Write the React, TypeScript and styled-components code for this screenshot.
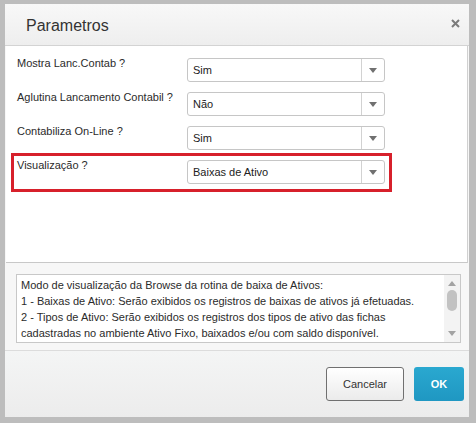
import React from 'react';
import styled, { createGlobalStyle } from 'styled-components';

type Param = { label: string; value: string; highlight?: boolean };

const params: Param[] = [
  { label: 'Mostra Lanc.Contab ?', value: 'Sim' },
  { label: 'Aglutina Lancamento Contabil ?', value: 'Não' },
  { label: 'Contabiliza On-Line ?', value: 'Sim' },
  { label: 'Visualização ?', value: 'Baixas de Ativo', highlight: true },
];

const help = [
  'Modo de visualização da Browse da rotina de baixa de Ativos:',
  '1 - Baixas de Ativo: Serão exibidos os registros de baixas de ativos já efetuadas.',
  '2 - Tipos de Ativo: Serão exibidos os registros dos tipos de ativo das fichas',
  'cadastradas no ambiente Ativo Fixo, baixados e/ou com saldo disponível.',
];

export default function App() {
  return (
    <>
      <GlobalStyle />
      <Dialog>
        <Header>
          <Title>Parametros</Title>
          <CloseButton aria-label="Fechar">
            <svg width="9" height="9" viewBox="0 0 9 9">
              <path d="M1 1L8 8M8 1L1 8" stroke="#7b7b7b" strokeWidth="2" />
            </svg>
          </CloseButton>
        </Header>

        <Panel>
          {params.map(p => (
            <Row key={p.label} $highlight={p.highlight}>
              <Label>{p.label}</Label>
              <Select>
                <SelectValue>{p.value}</SelectValue>
                <SelectArrow>
                  <svg width="8" height="5" viewBox="0 0 8 5">
                    <path d="M0 0H8L4 5Z" fill="#707070" />
                  </svg>
                </SelectArrow>
              </Select>
            </Row>
          ))}
        </Panel>

        <HelpArea>
          <HelpBox>
            <HelpText>
              {help.map(line => (
                <div key={line}>{line}</div>
              ))}
            </HelpText>
            <ScrollBar>
              <svg width="8" height="5" viewBox="0 0 8 5">
                <path d="M0 5H8L4 0Z" fill="#a3a3a3" />
              </svg>
              <Thumb />
              <Spacer />
              <svg width="8" height="5" viewBox="0 0 8 5">
                <path d="M0 0H8L4 5Z" fill="#a3a3a3" />
              </svg>
            </ScrollBar>
          </HelpBox>
        </HelpArea>

        <Footer>
          <CancelButton>Cancelar</CancelButton>
          <OkButton>OK</OkButton>
        </Footer>
      </Dialog>
    </>
  );
}

// ===== styled-components =====

const GlobalStyle = createGlobalStyle`
  html, body {
    margin: 0;
    background: #bdbdbd;
    font-family: "Liberation Sans", Arial, sans-serif;
  }
`;

const Dialog = styled.div`
  width: 464px;
  height: 413px;
  margin: 4px 0 0 5px;
  display: flex;
  flex-direction: column;
  background: #f7f7f7;
  overflow: hidden;
`;

const Header = styled.div`
  height: 42px;
  box-sizing: border-box;
  display: flex;
  align-items: flex-start;
  justify-content: space-between;
  padding: 0 9px 0 21px;
  background: linear-gradient(#f8f8f8, #eeeeee);
  border-bottom: 1px solid #d3d3d3;
`;

const Title = styled.h1`
  margin: 12px 0 0;
  font-size: 16px;
  line-height: 20px;
  font-weight: normal;
  color: #333;
`;

const CloseButton = styled.button`
  margin-top: 15px;
  padding: 0;
  border: none;
  background: none;
  display: flex;
  cursor: pointer;
`;

const Panel = styled.div`
  height: 217px;
  box-sizing: border-box;
  margin: 0 1px;
  padding-top: 5px;
  padding-left: 5px;
  background: #fff;
  border-bottom: 1px solid #c8c8c8;
  border-right: 1px solid #d0d0d0;
`;

const Row = styled.div<{ $highlight?: boolean }>`
  width: 381px;
  box-sizing: border-box;
  display: flex;
  align-items: flex-start;
  padding: 4px 4px ${p => (p.$highlight ? '5px' : '0')} 3px;
  border: 3px solid ${p => (p.$highlight ? '#d7202b' : 'transparent')};
`;

const Label = styled.div`
  width: 170px;
  margin-top: -1px;
  font-size: 11px;
  line-height: 13px;
  color: #2b2b2b;
`;

const Select = styled.div`
  width: 198px;
  height: 24px;
  box-sizing: border-box;
  display: flex;
  align-items: stretch;
  border: 1px solid #c6c6c6;
  border-radius: 3px;
  background: #fff;
`;

const SelectValue = styled.div`
  flex: 1;
  display: flex;
  align-items: center;
  padding-left: 5px;
  font-size: 11px;
  color: #222;
`;

const SelectArrow = styled.div`
  width: 22px;
  display: flex;
  align-items: center;
  justify-content: center;
  border-left: 1px solid #d2d2d2;
`;

const HelpArea = styled.div`
  flex: 1;
  padding: 11px 8px 7px 11px;
  border-bottom: 1px solid #dcdcdc;
`;

const HelpBox = styled.div`
  height: 69px;
  box-sizing: border-box;
  display: flex;
  border: 1px solid #c8c8c8;
  background: #fff;
`;

const HelpText = styled.div`
  flex: 1;
  padding: 2px 0 0 4px;
  font-size: 11px;
  line-height: 16px;
  color: #2b2b2b;
  white-space: nowrap;
`;

const ScrollBar = styled.div`
  width: 16px;
  display: flex;
  flex-direction: column;
  align-items: center;
  padding: 6px 0 6px;
  background: #f3f3f3;
`;

const Thumb = styled.div`
  width: 10px;
  height: 21px;
  margin-top: 4px;
  border-radius: 5px;
  background: #c2c2c2;
`;

const Spacer = styled.div`
  flex: 1;
`;

const Footer = styled.div`
  height: 66px;
  box-sizing: border-box;
  display: flex;
  justify-content: flex-end;
  align-items: flex-start;
  gap: 10px;
  padding: 16px 5px 0 0;
  background: linear-gradient(#f4f5f5, #ececec);
`;

const ButtonBase = styled.button`
  height: 34px;
  border-radius: 3px;
  font-family: "Liberation Sans", Arial, sans-serif;
  font-size: 11px;
  cursor: pointer;
`;

const CancelButton = styled(ButtonBase)`
  width: 78px;
  border: 1px solid #707070;
  background: linear-gradient(#ffffff, #ebebeb);
  color: #333;
`;

const OkButton = styled(ButtonBase)`
  width: 50px;
  border: none;
  background: linear-gradient(#2aa8d0, #1f97c2);
  color: #fff;
  font-weight: bold;
`;
